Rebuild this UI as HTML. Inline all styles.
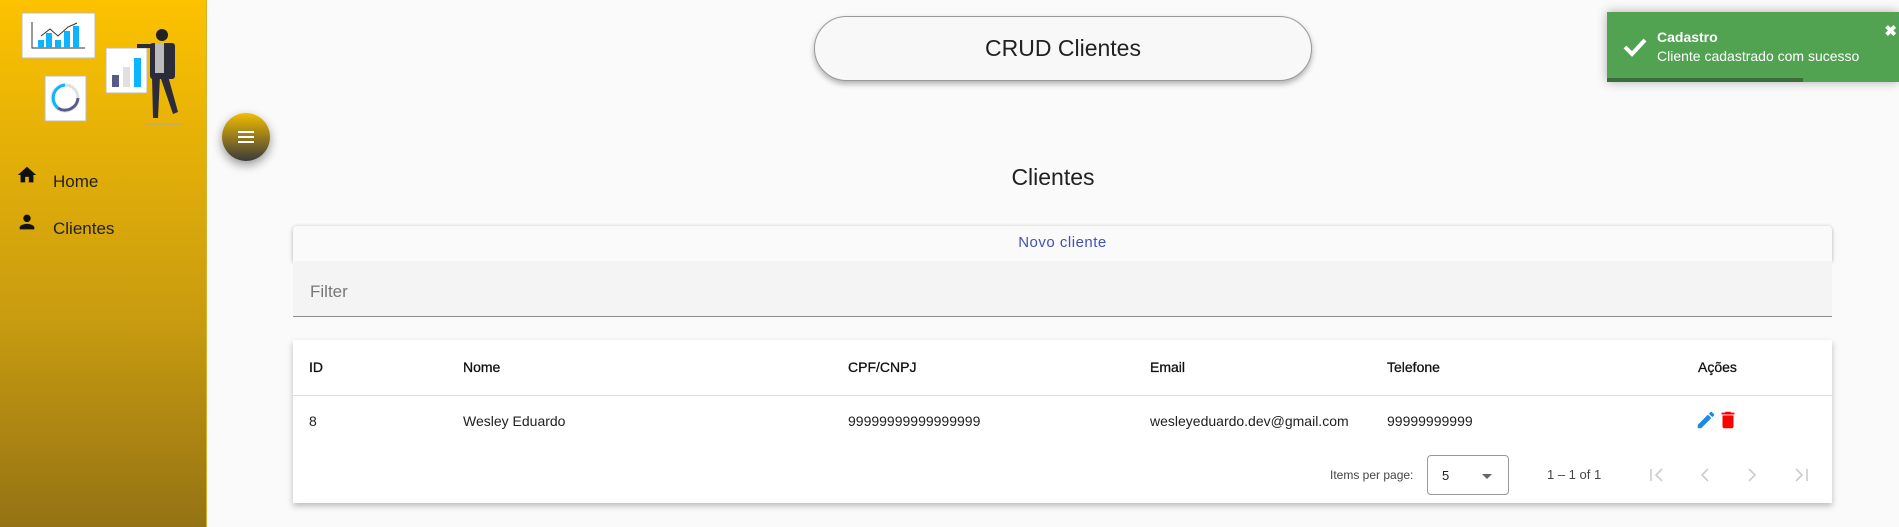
<!DOCTYPE html>
<html><head><meta charset="utf-8"><style>
*{box-sizing:border-box;margin:0;padding:0}
body{width:1899px;height:527px;overflow:hidden;background:#fafafa;font-family:"Liberation Sans",sans-serif;position:relative;color:#212121}
.side{position:absolute;left:0;top:0;width:207px;height:527px;background:linear-gradient(#fcc200,#c99c10 60%,#947314);border-right:1px solid #d8b030}
.nav{position:absolute;left:0;font-size:17px;color:#222}
.pill{position:absolute;left:814px;top:16px;width:498px;height:65px;border:1px solid #999;border-radius:33px;background:#f8f8f8;box-shadow:0 3px 6px rgba(0,0,0,.3);text-align:center;line-height:63px;font-size:23px;color:#222}
.fab{position:absolute;left:222px;top:113px;width:48px;height:48px;border-radius:50%;background:linear-gradient(#f1bc00,#3a3a3a);box-shadow:0 4px 10px rgba(0,0,0,.4)}
.fab i{position:absolute;left:16px;width:16px;height:2px;background:#fff}
.toast{position:absolute;left:1607px;top:12px;width:292px;height:70px;background:#51a351;box-shadow:0 0 10px rgba(0,0,0,.3);color:#fff}
.h{position:absolute;left:0;width:1899px;padding-left:207px;text-align:center;top:164px;font-size:23px}
.novo{position:absolute;left:293px;top:226px;width:1539px;height:35px;background:#fafafa;box-shadow:0 1px 4px rgba(0,0,0,.3);border-radius:4px 4px 0 0;text-align:center;line-height:34px;color:#3f51b5;font-size:15px;letter-spacing:.5px}
.filter{position:absolute;left:293px;top:261px;width:1539px;height:56px;background:#f4f4f4;border-bottom:1px solid #8a8a8a;font-size:17px;color:#777;padding:21px 17px}
.card{position:absolute;left:293px;top:340px;width:1539px;height:163px;background:#fff;box-shadow:0 3px 6px rgba(0,0,0,.25)}
.c{position:absolute;font-size:14px;white-space:nowrap}
.hd{font-weight:normal;color:#111;-webkit-text-stroke:.3px #111}
.pg{position:absolute}
</style></head><body>
<div class="side">
<svg width="207" height="135" style="position:absolute;left:0;top:0">
<rect x="22" y="13" width="73" height="45" fill="#fff" stroke="#bbb" stroke-width="1"/>
<polyline points="32,22 32,48 85,48" fill="none" stroke="#333" stroke-width="1"/>
<rect x="38" y="40" width="6" height="8" fill="#0bb4ff"/><rect x="46" y="33" width="6" height="15" fill="#0bb4ff"/><rect x="55" y="40" width="6" height="8" fill="#0bb4ff"/><rect x="64" y="31" width="6" height="17" fill="#0bb4ff"/><rect x="73" y="26" width="6" height="22" fill="#0bb4ff"/>
<polyline points="41,36 50,29 58,36 68,27 77,23" fill="none" stroke="#333" stroke-width="1"/>
<rect x="45" y="76" width="41" height="45" fill="#fff" stroke="#bbb"/>
<circle cx="65" cy="98" r="13" fill="none" stroke="#e0e0e0" stroke-width="3"/>
<path d="M58 108 A13 13 0 0 1 65 85" fill="none" stroke="#0bb4ff" stroke-width="3"/>
<path d="M78 98 A13 13 0 0 1 58 108" fill="none" stroke="#5a5a8a" stroke-width="3"/>
<rect x="106" y="48" width="41" height="45" fill="#fff" stroke="#bbb"/>
<rect x="112" y="75" width="7" height="12" fill="#5a5a8a"/><rect x="123" y="67" width="7" height="20" fill="#e0e0e0"/><rect x="134" y="58" width="7" height="29" fill="#0bb4ff"/>
<circle cx="162" cy="35" r="6" fill="#222"/><rect x="150" y="43" width="25" height="36" rx="3" fill="#2b2b3a"/><rect x="155" y="43" width="9" height="30" fill="#bbb"/>
<path d="M152 76 L160 76 L158 118 L153 118 Z" fill="#2b2b3a"/><path d="M160 76 L168 76 L178 112 L173 114 Z" fill="#2b2b3a"/>
<line x1="137" y1="46" x2="152" y2="46" stroke="#2b2b3a" stroke-width="4"/>
<line x1="146" y1="124" x2="182" y2="124" stroke="#aaa"/>
</svg>
<svg width="24" height="22" style="position:absolute;left:15px;top:164px" viewBox="0 0 24 24"><path d="M10 20v-6h4v6h5v-8h3L12 3 2 12h3v8z" fill="#111"/></svg>
<div class="nav" style="left:53px;top:172px">Home</div>
<svg width="24" height="22" style="position:absolute;left:15px;top:211px" viewBox="0 0 24 24"><path d="M12 12c2.2 0 4-1.8 4-4s-1.8-4-4-4-4 1.8-4 4 1.8 4 4 4zm0 2c-2.7 0-8 1.3-8 4v2h16v-2c0-2.7-5.3-4-8-4z" fill="#111"/></svg>
<div class="nav" style="left:53px;top:219px">Clientes</div>
</div>
<div class="pill">CRUD Clientes</div>
<div class="fab"><i style="top:18px"></i><i style="top:23px"></i><i style="top:28px"></i></div>
<div class="toast">
<svg width="26" height="22" style="position:absolute;left:15px;top:24px" viewBox="0 0 26 22"><path d="M3 11l7 7L23 4" fill="none" stroke="#fff" stroke-width="4"/></svg>
<div style="position:absolute;left:50px;top:17px;font-size:14px;font-weight:bold">Cadastro</div>
<div style="position:absolute;left:50px;top:36px;font-size:14px">Cliente cadastrado com sucesso</div>
<div style="position:absolute;right:2px;top:10px;font-size:15px;font-weight:bold">✖</div>
<div style="position:absolute;left:0;bottom:0;width:196px;height:4px;background:#3a6e3a"></div>
</div>
<div class="h">Clientes</div>
<div class="novo">Novo cliente</div>
<div class="filter">Filter</div>
<div class="card">
<div class="c hd" style="left:16px;top:19px">ID</div>
<div class="c hd" style="left:170px;top:19px">Nome</div>
<div class="c hd" style="left:555px;top:19px">CPF/CNPJ</div>
<div class="c hd" style="left:857px;top:19px">Email</div>
<div class="c hd" style="left:1094px;top:19px">Telefone</div>
<div class="c hd" style="left:1405px;top:19px">Ações</div>
<div style="position:absolute;left:0;top:55px;width:100%;height:1px;background:#e0e0e0"></div>
<div class="c" style="left:16px;top:73px">8</div>
<div class="c" style="left:170px;top:73px">Wesley Eduardo</div>
<div class="c" style="left:555px;top:73px">99999999999999999</div>
<div class="c" style="left:857px;top:73px">wesleyeduardo.dev@gmail.com</div>
<div class="c" style="left:1094px;top:73px">99999999999</div>
<svg width="22" height="22" style="position:absolute;left:1402px;top:69px" viewBox="0 0 24 24"><path d="M3 17.25V21h3.75L17.8 9.94l-3.75-3.75zM20.7 7.04a1 1 0 000-1.41l-2.34-2.34a1 1 0 00-1.41 0l-1.83 1.83 3.75 3.75z" fill="#1e88e5"/></svg>
<svg width="22" height="24" style="position:absolute;left:1424px;top:68px" viewBox="0 0 24 24"><path d="M6 19c0 1.1.9 2 2 2h8c1.1 0 2-.9 2-2V7H6zM19 4h-3.5l-1-1h-5l-1 1H5v2h14z" fill="#f00"/></svg>
<div class="c" style="left:1037px;top:128px;font-size:12px;color:#444">Items per page:</div>
<div style="position:absolute;left:1134px;top:115px;width:82px;height:40px;border:1px solid #999;border-radius:4px"><span style="position:absolute;left:14px;top:12px;font-size:13px">5</span><span style="position:absolute;left:54px;top:18px;border:5px solid transparent;border-top-color:#666"></span></div>
<div class="c" style="left:1254px;top:127px;font-size:13px;color:#444">1 – 1 of 1</div>
<svg class="pg" style="left:1352px;top:123px" width="24" height="24" viewBox="0 0 24 24"><path d="M6 6v12M17 6l-6 6 6 6" fill="none" stroke="#ccc" stroke-width="1.6"/></svg>
<svg class="pg" style="left:1400px;top:123px" width="24" height="24" viewBox="0 0 24 24"><path d="M15 6l-6 6 6 6" fill="none" stroke="#ccc" stroke-width="1.6"/></svg>
<svg class="pg" style="left:1447px;top:123px" width="24" height="24" viewBox="0 0 24 24"><path d="M9 6l6 6-6 6" fill="none" stroke="#ccc" stroke-width="1.6"/></svg>
<svg class="pg" style="left:1496px;top:123px" width="24" height="24" viewBox="0 0 24 24"><path d="M18 6v12M7 6l6 6-6 6" fill="none" stroke="#ccc" stroke-width="1.6"/></svg>
</div>
</body></html>
